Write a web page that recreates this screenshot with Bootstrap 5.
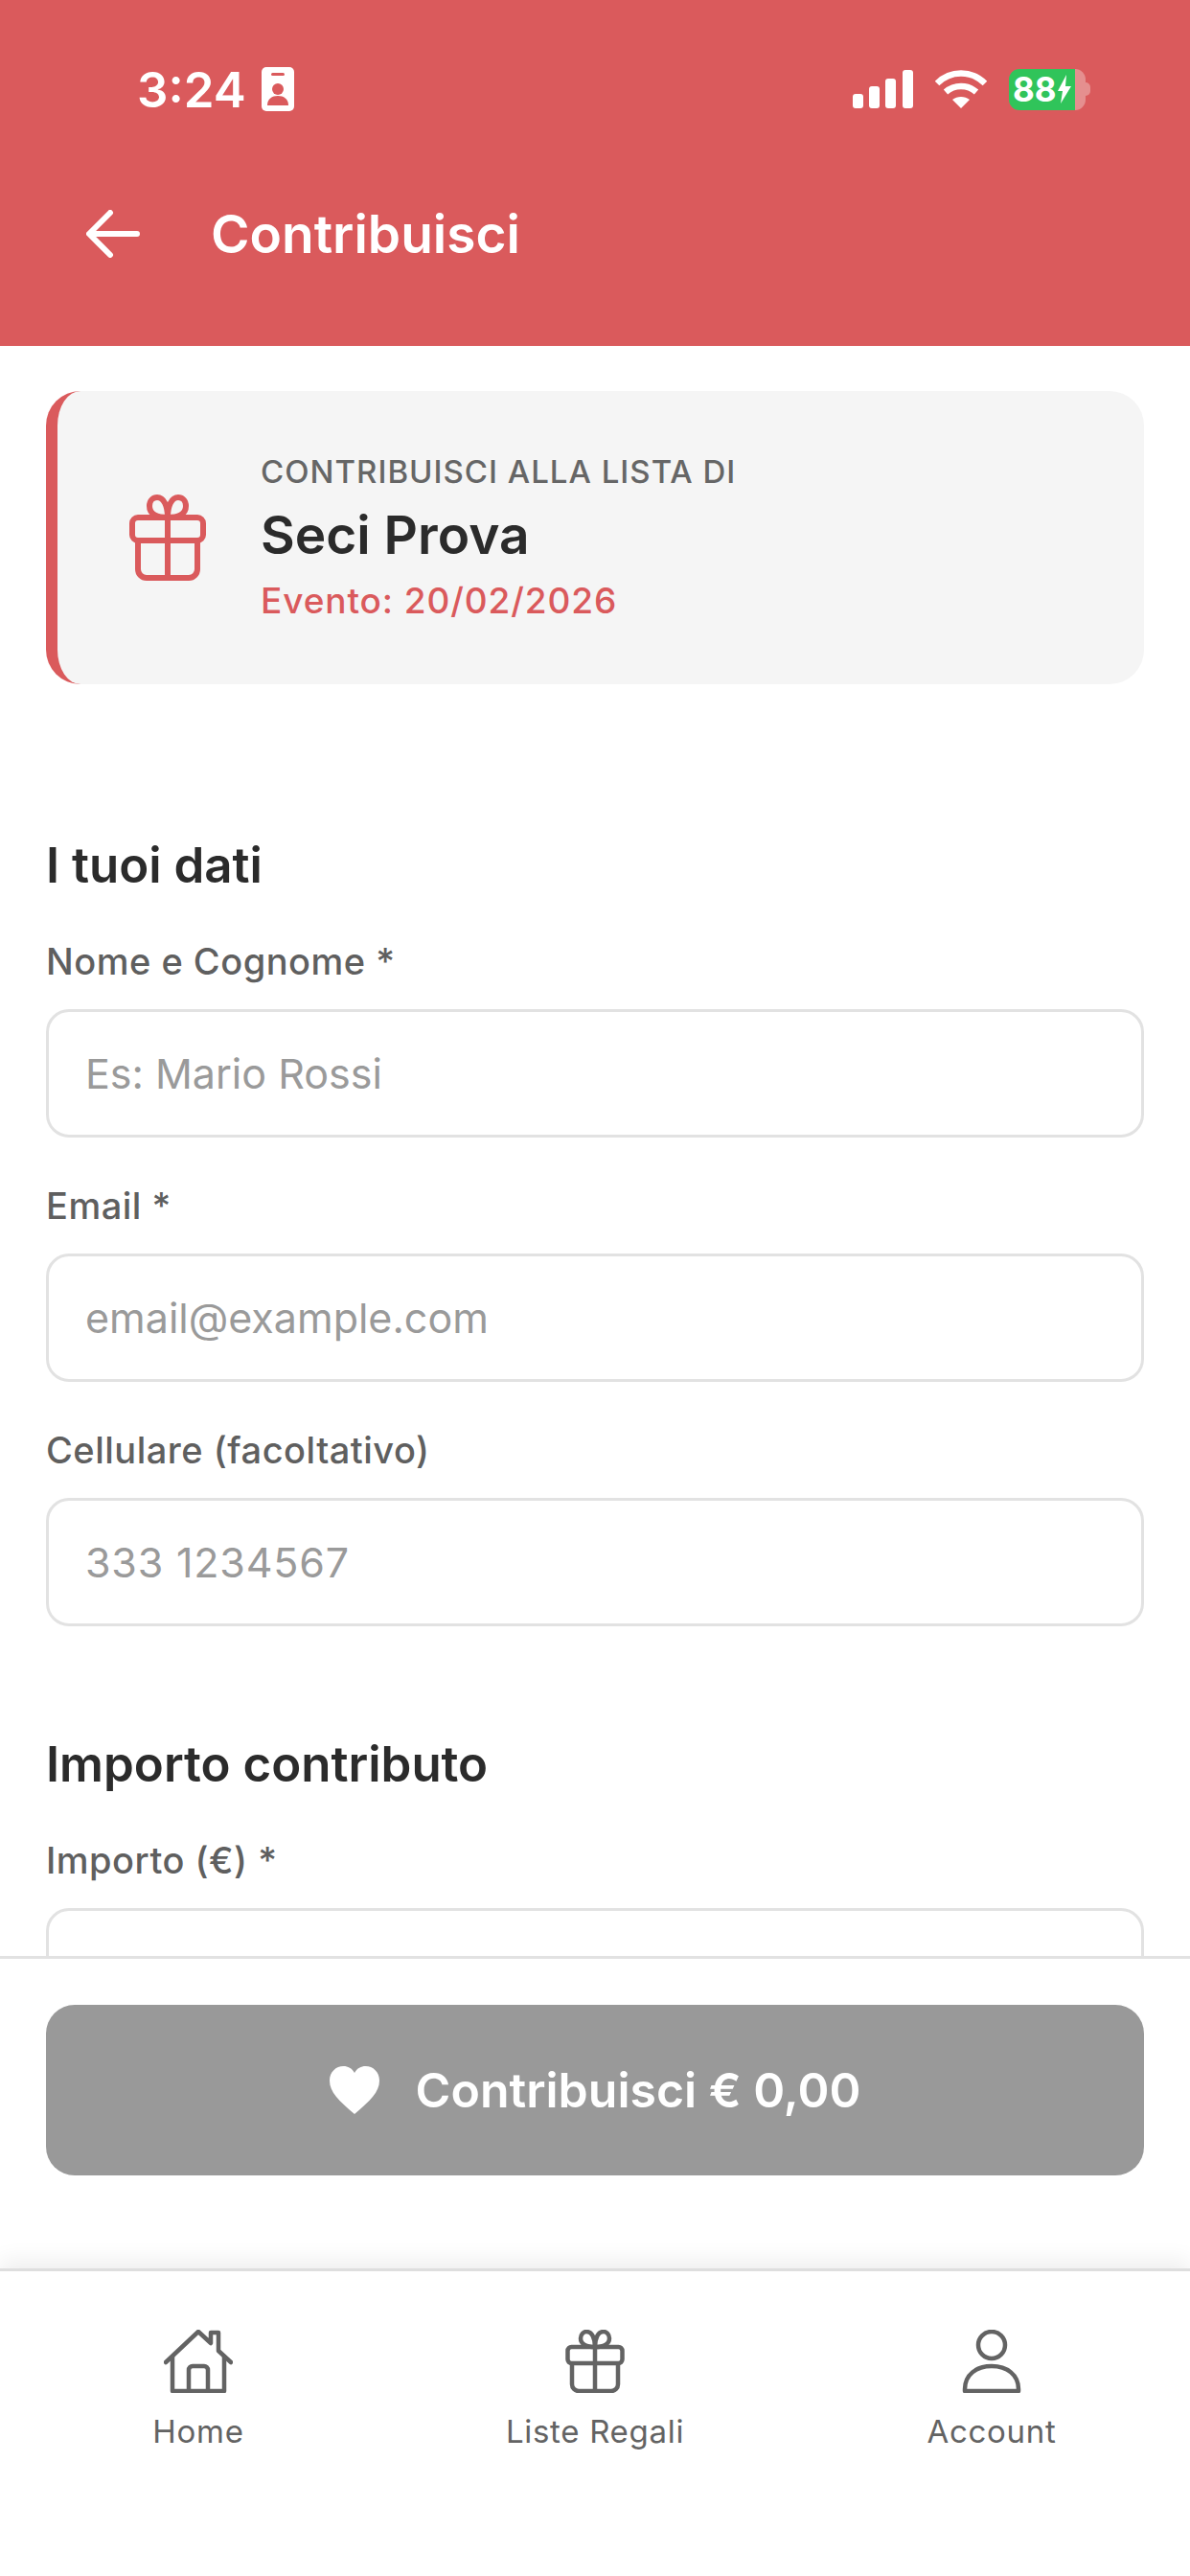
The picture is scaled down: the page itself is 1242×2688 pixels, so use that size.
<!DOCTYPE html>
<html lang="it">
<head>
    <meta charset="UTF-8">
    <meta name="viewport" content="width=device-width, initial-scale=1.0">
    <title>Contribuisci</title>
    <link href="https://cdn.jsdelivr.net/npm/bootstrap@5.3.0/dist/css/bootstrap.min.css" rel="stylesheet">
    <style>
        body {
            font-family: "Inter", "Liberation Sans", sans-serif;
            background-color: #fff;
            color: #2b2b2b;
        }
        .app-shell {
            height: 2688px;
            overflow: hidden;
        }
        .app-head {
            height: 361px;
            background-color: #da5a5c;
            color: #fff;
            flex-shrink: 0;
        }
        .status-row {
            height: 70px;
            margin-top: 58px;
            padding: 0 104px 0 143px;
        }
        .status-time {
            font-size: 51px;
            font-weight: 600;
            line-height: 1;
        }
        .status-icons {
            gap: 23px;
        }
        .batt-box {
            width: 80px;
            height: 43px;
            border-radius: 11px;
            background: linear-gradient(90deg, #30c45a 0 86%, #e58f8f 86%);
            font-size: 35px;
            font-weight: 700;
            line-height: 43px;
            padding-left: 4px;
            gap: 1px;
        }
        .batt-tip {
            width: 5px;
            height: 14px;
            border-radius: 0 5px 5px 0;
            background-color: #e58f8f;
            margin-left: -23px;
        }
        .head-title-row {
            margin-top: 83px;
            padding-left: 90px;
            gap: 74px;
        }
        .head-title {
            font-size: 55px;
            font-weight: 600;
            line-height: 1.2;
            margin: 0;
        }
        .form-area {
            padding: 47px 48px 0;
            min-height: 0;
        }
        .list-banner {
            height: 306px;
            background-color: #f5f5f5;
            border-left: 12px solid #da5a5c;
            border-radius: 36px;
            padding-left: 74px;
            gap: 56px;
        }
        .banner-over {
            font-size: 33px;
            font-weight: 500;
            letter-spacing: 1px;
            color: #666;
            line-height: 1.2;
        }
        .banner-name {
            font-size: 55px;
            font-weight: 600;
            line-height: 1.2;
            margin: 12px 0 14px;
        }
        .banner-date {
            font-size: 37px;
            font-weight: 500;
            letter-spacing: .9px;
            color: #da5a5c;
            line-height: 1.2;
        }
        .block-title {
            font-size: 51px;
            font-weight: 600;
            line-height: 56px;
            margin: 0 0 50px;
        }
        .first-block {
            margin-top: 161px;
        }
        .next-block {
            margin-top: 116px;
        }
        .field-label {
            display: block;
            font-size: 38px;
            font-weight: 500;
            letter-spacing: .5px;
            color: #5f5f5f;
            line-height: 44px;
            margin-bottom: 28px;
        }
        .field-wrap {
            margin-bottom: 49px;
        }
        .app-input.form-control {
            height: 134px;
            border: 3px solid #e2e2e2;
            border-radius: 24px;
            padding: 0 38px;
            font-size: 43px;
            color: #2b2b2b;
        }
        .app-input.form-control::placeholder {
            color: #9a9a9a;
        }
        .phone-input.form-control::placeholder {
            letter-spacing: .8px;
        }
        .cta-bar {
            height: 326px;
            flex-shrink: 0;
            background-color: #fff;
            border-top: 3px solid #e2e2e2;
            padding: 48px 48px 0;
            position: relative;
            z-index: 1;
        }
        .cta-btn.btn {
            height: 178px;
            width: 100%;
            background-color: #999;
            border: 0;
            border-radius: 30px;
            color: #fff;
            font-size: 50px;
            font-weight: 600;
            gap: 38px;
        }
        .tab-bar {
            height: 321px;
            flex-shrink: 0;
            background-color: #fff;
            border-top: 3px solid #dedede;
            box-shadow: 0 -8px 22px rgba(0, 0, 0, .07);
            padding-top: 61px;
            position: relative;
            z-index: 2;
        }
        .tab-item {
            color: #636363;
            font-size: 33px;
            font-weight: 400;
            letter-spacing: .7px;
            line-height: 40px;
            gap: 20px;
        }
    </style>
</head>
<body>
    <div class="app-shell d-flex flex-column">
        <!-- Header -->
        <header class="app-head">
            <div class="status-row d-flex align-items-center justify-content-between">
                <div class="d-flex align-items-center gap-3">
                    <span class="status-time">3:24</span>
                    <svg width="34" height="46" viewBox="0 0 34 46">
                        <rect width="34" height="46" rx="5" fill="#fff"/>
                        <rect x="10" y="6" width="14" height="3" rx="1.5" fill="#da5a5c"/>
                        <circle cx="17" cy="23" r="6" fill="#da5a5c"/>
                        <path d="M6 40c0-7 5-10 11-10s11 3 11 10z" fill="#da5a5c"/>
                    </svg>
                </div>
                <div class="status-icons d-flex align-items-center">
                    <svg width="63" height="40" viewBox="0 0 63 40" fill="#fff">
                        <rect x="0" y="25" width="11" height="15" rx="3"/>
                        <rect x="17" y="17" width="11" height="23" rx="3"/>
                        <rect x="34" y="9" width="11" height="31" rx="3"/>
                        <rect x="52" y="0" width="11" height="40" rx="3"/>
                    </svg>
                    <svg width="54" height="40" viewBox="0 0 54 40" fill="none" stroke="#fff" stroke-width="6.5">
                        <path d="M2 14C16 0 38 0 52 14"/>
                        <path d="M11 23c9-8 23-8 32 0"/>
                        <path d="M27 40l-9-9c5-4 13-4 18 0z" fill="#fff" stroke="none"/>
                    </svg>
                    <div class="batt-box d-flex align-items-center">
                        <span>88</span>
                        <svg width="14" height="30" viewBox="0 0 14 30" fill="#fff">
                            <path d="M9 0L0 17h5l-2 13 11-18H8z"/>
                        </svg>
                    </div>
                    <div class="batt-tip"></div>
                </div>
            </div>
            <div class="head-title-row d-flex align-items-center">
                <svg width="56" height="50" viewBox="0 0 56 50" fill="none" stroke="#fff" stroke-width="6" stroke-linecap="round" stroke-linejoin="round">
                    <path d="M53 25H4M25 3L3 25l22 22"/>
                </svg>
                <h1 class="head-title">Contribuisci</h1>
            </div>
        </header>

        <!-- Form -->
        <main class="form-area flex-grow-1 overflow-hidden">
            <div class="list-banner d-flex align-items-center">
                <svg width="82" height="90" viewBox="0 0 82 90" fill="none" stroke="#da5a5c" stroke-width="6" stroke-linejoin="round">
                    <rect x="4" y="24" width="74" height="24" rx="6"/>
                    <path d="M10 48v30a9 9 0 0 0 9 9h44a9 9 0 0 0 9-9V48M41 24v63"/>
                    <path d="M41 24c-12 0-19-4-19-12 0-6 4-9 8-9 7 0 11 9 11 21zM41 24c12 0 19-4 19-12 0-6-4-9-8-9-7 0-11 9-11 21z"/>
                </svg>
                <div>
                    <div class="banner-over">CONTRIBUISCI ALLA LISTA DI</div>
                    <div class="banner-name">Seci Prova</div>
                    <div class="banner-date">Evento: 20/02/2026</div>
                </div>
            </div>

            <h2 class="block-title first-block">I tuoi dati</h2>
            <div class="field-wrap">
                <label class="field-label" for="nome">Nome e Cognome *</label>
                <input class="form-control app-input" id="nome" type="text" placeholder="Es: Mario Rossi">
            </div>
            <div class="field-wrap">
                <label class="field-label" for="email">Email *</label>
                <input class="form-control app-input" id="email" type="email" placeholder="email@example.com">
            </div>
            <div class="field-wrap">
                <label class="field-label" for="cell">Cellulare (facoltativo)</label>
                <input class="form-control app-input phone-input" id="cell" type="tel" placeholder="333 1234567">
            </div>

            <h2 class="block-title next-block">Importo contributo</h2>
            <div class="field-wrap">
                <label class="field-label" for="importo">Importo (€) *</label>
                <input class="form-control app-input" id="importo" type="text">
            </div>
        </main>

        <div class="cta-bar">
            <button type="button" class="btn cta-btn d-flex align-items-center justify-content-center">
                <svg width="52" height="50" viewBox="0 0 54 50" fill="#fff" preserveAspectRatio="none">
                    <path d="M27 50C10 36 0 27 0 15 0 6 7 0 15 0c5 0 9 2 12 7 3-5 7-7 12-7 8 0 15 6 15 15 0 12-10 21-27 35z"/>
                </svg>
                Contribuisci € 0,00
            </button>
        </div>

        <!-- Tab bar -->
        <nav class="tab-bar row g-0">
            <div class="col-4">
                <div class="tab-item d-flex flex-column align-items-center">
                    <svg width="72" height="66" viewBox="0 0 72 66" fill="none" stroke="#636363" stroke-width="4.5" stroke-linecap="round" stroke-linejoin="round">
                        <path d="M2 34L36 2l13 12V3h8v19l13 12"/>
                        <path d="M9 28v36h54V28"/>
                        <path d="M26 64V42a4 4 0 0 1 4-4h12a4 4 0 0 1 4 4v22"/>
                    </svg>
                    <span>Home</span>
                </div>
            </div>
            <div class="col-4">
                <div class="tab-item d-flex flex-column align-items-center">
                    <svg width="62" height="66" viewBox="0 0 62 66" fill="none" stroke="#636363" stroke-width="4.5" stroke-linejoin="round">
                        <rect x="2.500" y="18" width="57" height="17" rx="4"/>
                        <path d="M7 35v22a7 7 0 0 0 7 7h34a7 7 0 0 0 7-7V35M31 18v46"/>
                        <path d="M31 18c-9 0-15-3-15-9 0-4 3-7 6-7 6 0 9 7 9 16zM31 18c9 0 15-3 15-9 0-4-3-7-6-7-6 0-9 7-9 16z"/>
                    </svg>
                    <span>Liste Regali</span>
                </div>
            </div>
            <div class="col-4">
                <div class="tab-item d-flex flex-column align-items-center">
                    <svg width="62" height="66" viewBox="0 0 62 66" fill="none" stroke="#636363" stroke-width="4.5" stroke-linejoin="round">
                        <circle cx="31" cy="16" r="14"/>
                        <path d="M3 64v-2c0-15 12-24 28-24s28 9 28 24v2z"/>
                    </svg>
                    <span>Account</span>
                </div>
            </div>
        </nav>
    </div>
    <script src="https://cdn.jsdelivr.net/npm/bootstrap@5.3.0/dist/js/bootstrap.bundle.min.js"></script>
</body>
</html>
